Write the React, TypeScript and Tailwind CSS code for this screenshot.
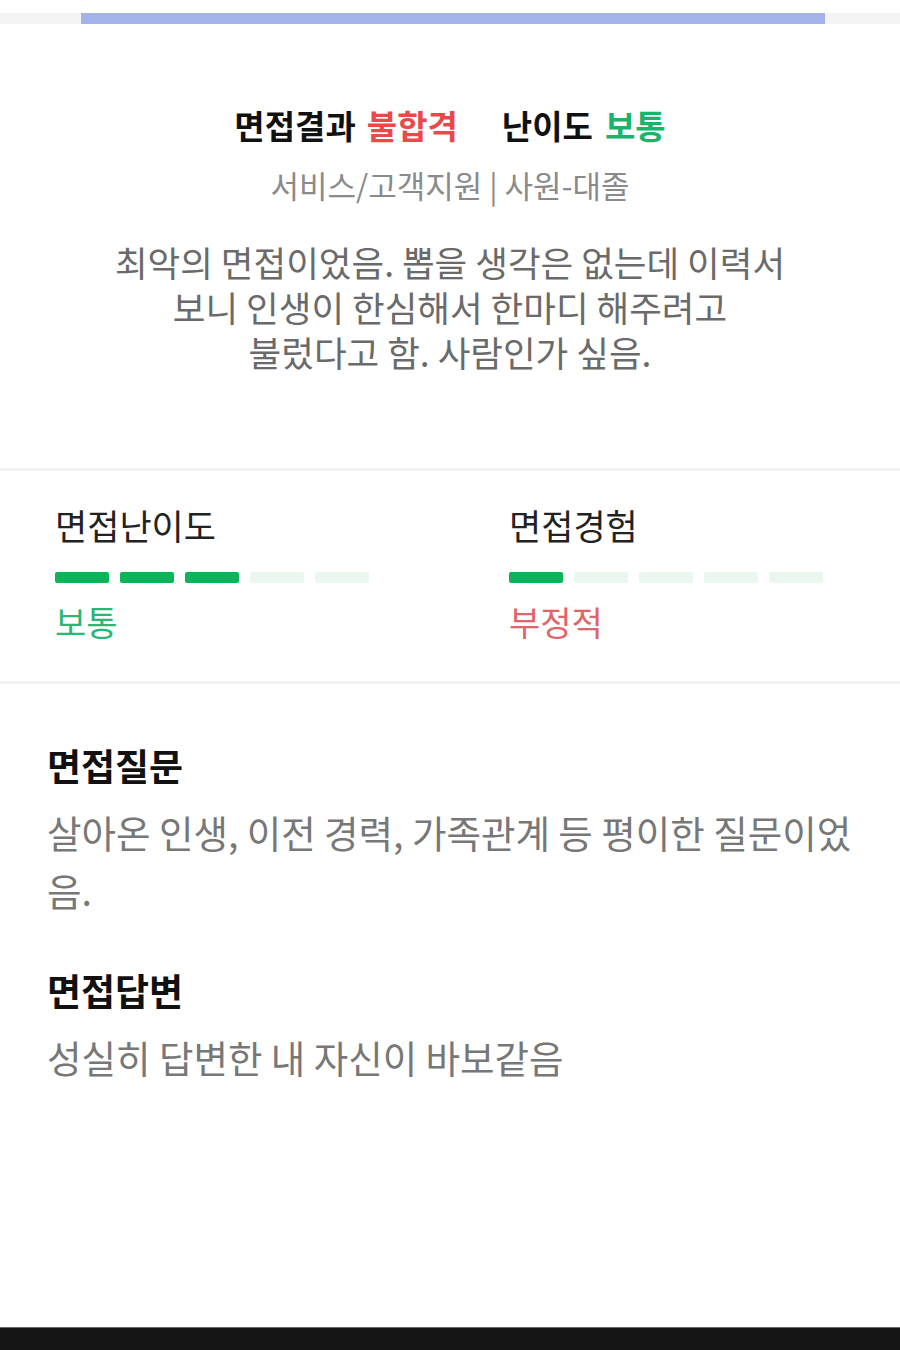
import React from "react";

const font = { fontFamily: '"Noto Sans CJK KR", "Noto Sans", sans-serif' };

function Meter({ filled }: { filled: number }) {
  return (
    <div className="flex gap-[11px]">
      {[0, 1, 2, 3, 4].map((i) => (
        <div
          key={i}
          className={
            i < filled
              ? "h-[11px] w-[54px] rounded-[2px] bg-[#0ab45a]"
              : "h-[11px] w-[54px] rounded-[2px] bg-[#eaf7ee]"
          }
        />
      ))}
    </div>
  );
}

export default function App() {
  return (
    <div className="flex h-[1350px] w-[900px] flex-col bg-white" style={font}>
      {/* progress strip */}
      <div className="h-[13px] bg-white" />
      <div className="h-[11px] bg-[#f4f4f4]">
        <div className="ml-[81px] h-full w-[744px] bg-[#a3b3ea]" />
      </div>

      {/* summary */}
      <div className="flex flex-col items-center pb-[94px] pt-[81px] text-center">
        <div className="flex items-center text-[33px] font-bold leading-[40px] text-[#111]">
          <span>면접결과</span>
          <span className="ml-[11px] text-[#e84a4a]">불합격</span>
          <span className="ml-[44px]">난이도</span>
          <span className="ml-[12px] text-[#17b56b]">보통</span>
        </div>
        <div className="mt-[22px] text-[31px] leading-[36px] text-[#8a8a8a]">
          서비스/고객지원 | 사원-대졸
        </div>
        <div className="mt-[36px] text-[35.5px] leading-[45px] text-[#6a6a6a]">
          <p>최악의 면접이었음. 뽑을 생각은 없는데 이력서</p>
          <p>보니 인생이 한심해서 한마디 해주려고</p>
          <p>불렀다고 함. 사람인가 싶음.</p>
        </div>
      </div>

      <div className="h-[3px] bg-[#f2f2f2]" />

      {/* ratings */}
      <div className="flex pb-[39px] pl-[55px] pt-[34px]">
        <div className="w-[454px]">
          <div className="text-[35px] leading-[40px] text-[#222]">면접난이도</div>
          <div className="mt-[27px]">
            <Meter filled={3} />
          </div>
          <div className="mt-[19px] text-[34px] leading-[40px] text-[#2bb673]">보통</div>
        </div>
        <div>
          <div className="text-[35px] leading-[40px] text-[#222]">면접경험</div>
          <div className="mt-[27px]">
            <Meter filled={1} />
          </div>
          <div className="mt-[19px] text-[34px] leading-[40px] text-[#e06468]">부정적</div>
        </div>
      </div>

      <div className="h-[3px] bg-[#f2f2f2]" />

      {/* questions and answers */}
      <div className="flex flex-1 flex-col pl-[47px] pr-[33px] pt-[59px]">
        <div className="text-[37px] font-bold leading-[44px] text-[#111]">면접질문</div>
        <div className="mt-[16px] text-[37.5px] leading-[58px] text-[#777]">
          살아온 인생, 이전 경력, 가족관계 등 평이한 질문이었음.
        </div>
        <div className="mt-[49px] text-[37px] font-bold leading-[44px] text-[#111]">면접답변</div>
        <div className="mt-[16px] text-[37.5px] leading-[58px] text-[#777]">
          성실히 답변한 내 자신이 바보같음
        </div>
      </div>

      {/* bottom bar */}
      <div className="h-px bg-[#6a6a6a]" />
      <div className="h-[22px] bg-[#141414]" />
    </div>
  );
}
